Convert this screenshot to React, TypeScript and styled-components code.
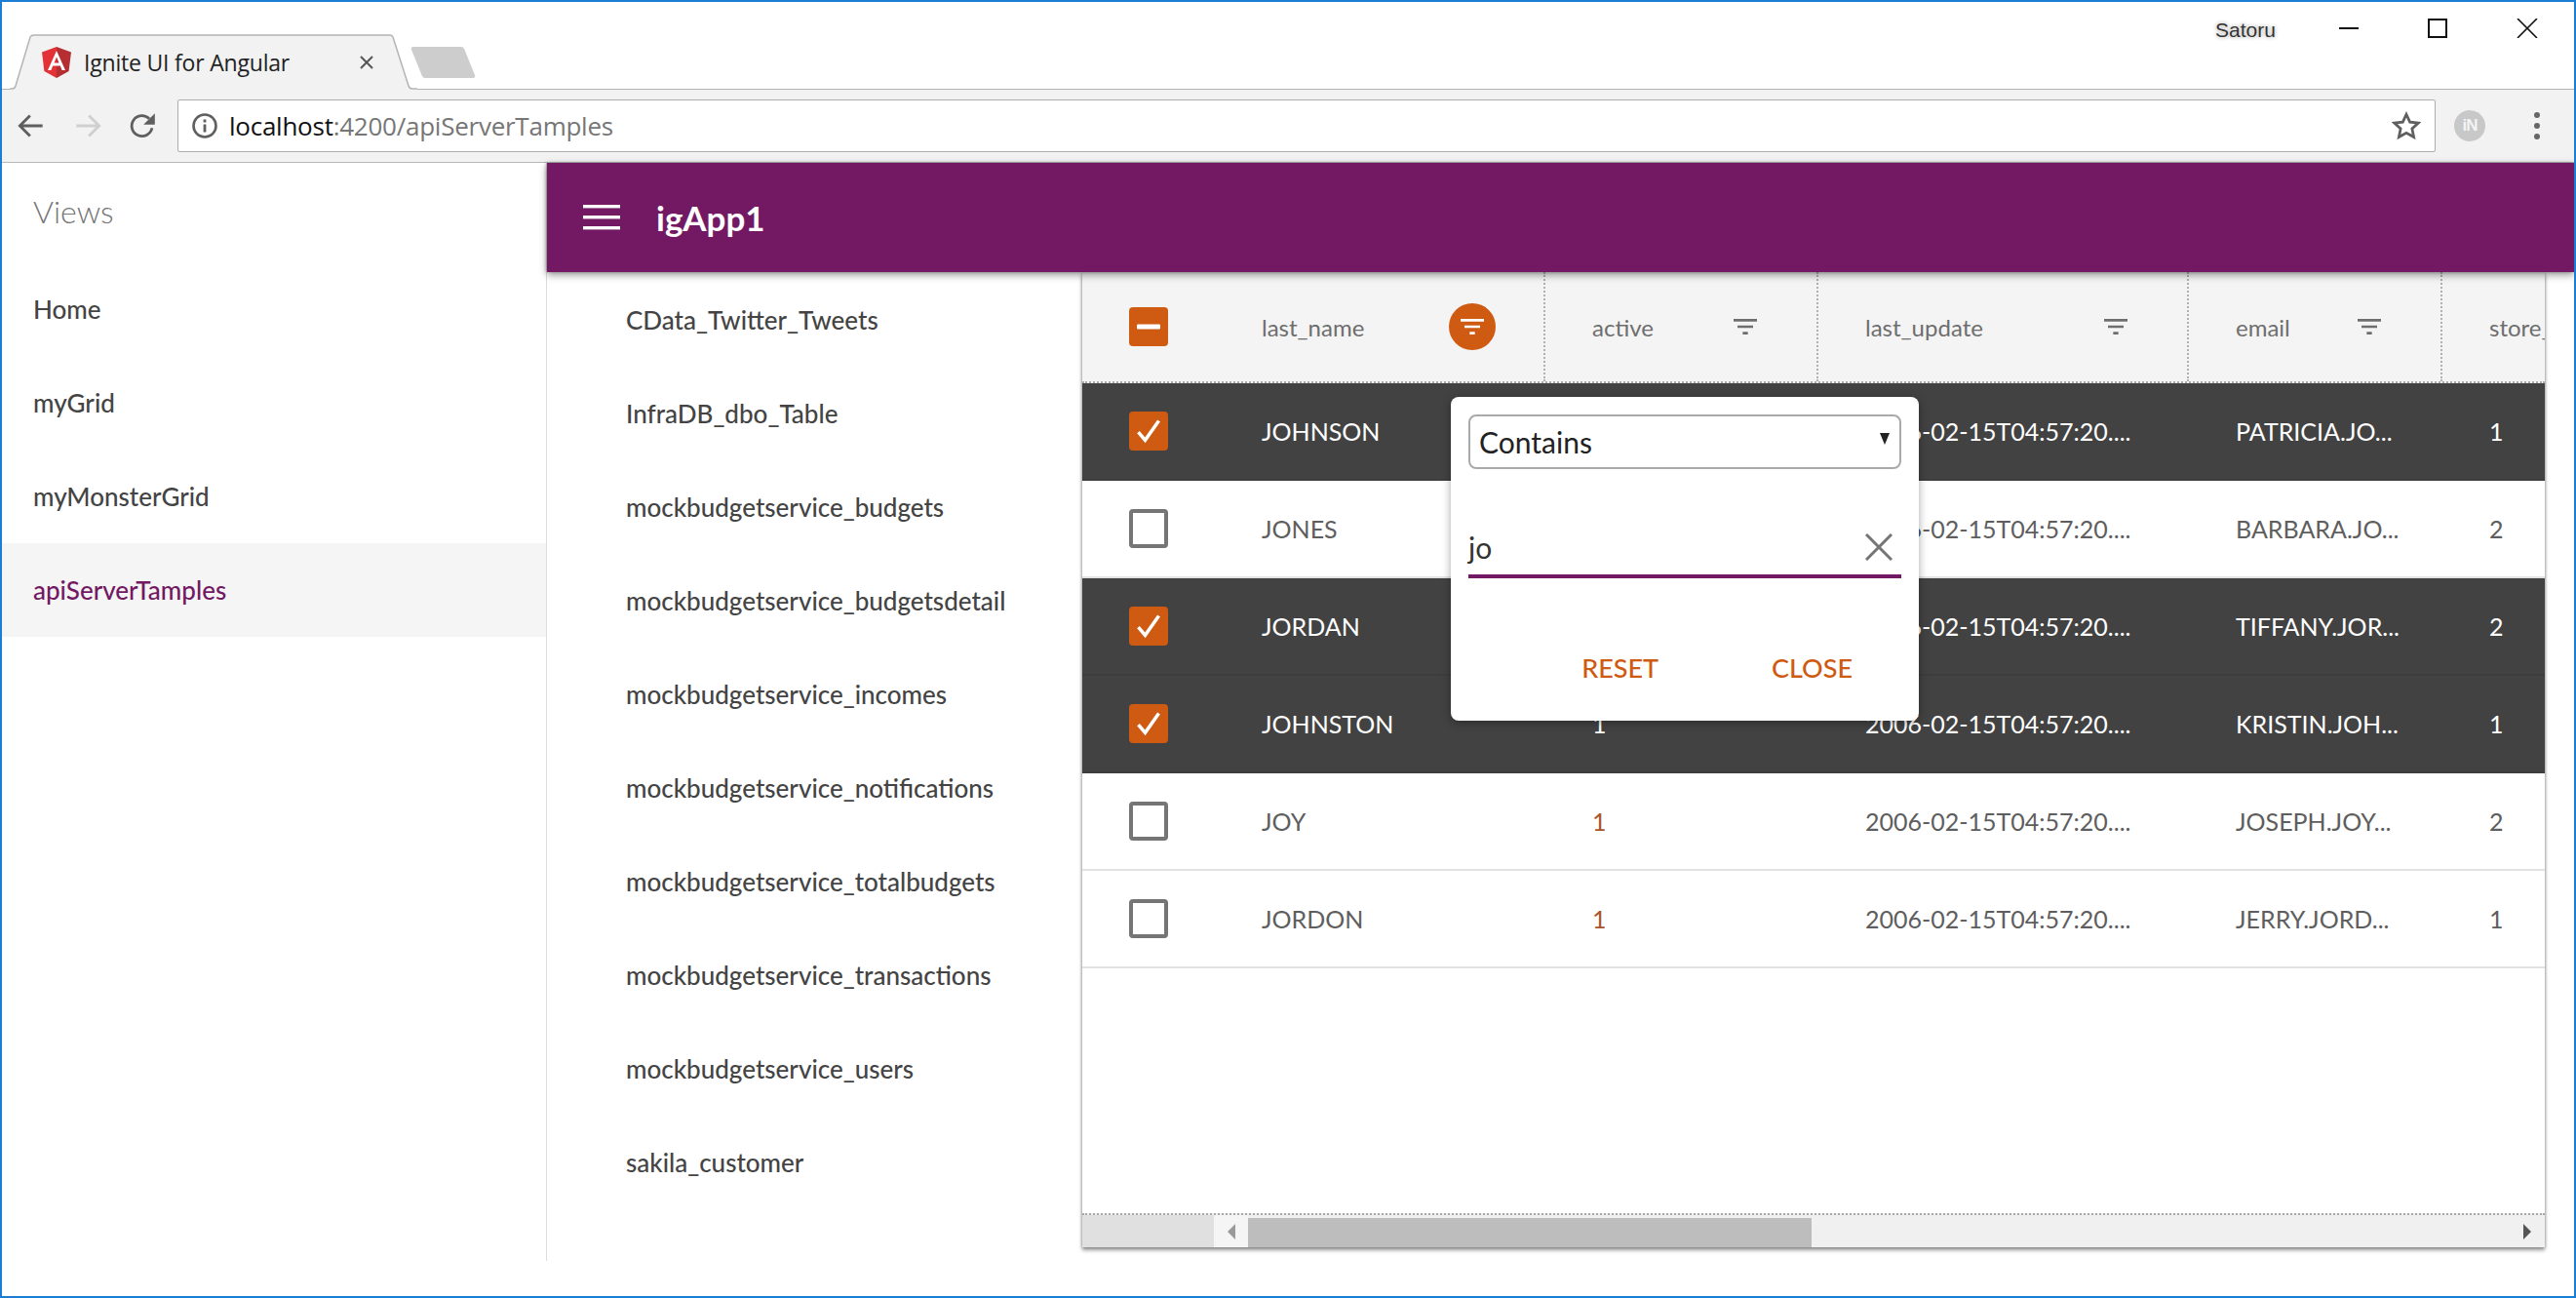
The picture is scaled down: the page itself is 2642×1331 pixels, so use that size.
import React from 'react';
import styled, { createGlobalStyle } from 'styled-components';

const ORANGE = '#cf5a11';
const PURPLE = '#731963';
const UI_FONT = '"Lato", "Noto Sans", sans-serif';

const GlobalStyle = createGlobalStyle`
  html, body { margin: 0; padding: 0; background: #fff; }
  * { box-sizing: border-box; }
`;

// Browser frame
const Frame = styled.div`
  width: 2642px;
  height: 1331px;
  border: 2px solid #1a7fd4;
  background: #fff;
  display: flex;
  flex-direction: column;
  overflow: hidden;
  font-family: ${UI_FONT};
`;

const TabStrip = styled.div`
  height: 90px;
  flex: none;
  display: flex;
  align-items: flex-end;
  padding-left: 8px;
  border-bottom: 1px solid #b4b4b4;
  position: relative;
`;

const Tab = styled.div`
  position: relative;
  width: 418px;
  height: 57px;
  margin-bottom: -1px;
  display: flex;
  align-items: center;
  padding-left: 33px;
  flex: none;
`;

const TabShape = styled.svg`
  position: absolute;
  left: 0;
  top: 0;
`;

const TabTitle = styled.span`
  position: relative;
  margin-left: 13px;
  width: 282px;
  font-family: "Open Sans", sans-serif;
  font-size: 23px;
  color: #222;
  letter-spacing: -0.2px;
  white-space: nowrap;
`;

const TabClose = styled.svg`
  position: relative;
`;

const Logo = styled.svg`
  position: relative;
  flex: none;
`;

const NewTab = styled.svg`
  margin: 0 0 9px -7px;
  flex: none;
`;

const Account = styled.div`
  position: absolute;
  left: 2270px;
  top: 15px;
  font-family: "Liberation Sans", sans-serif;
  font-size: 21px;
  line-height: 28px;
  color: #333;
  text-shadow: 0 0 3px #fff, 0 0 4px #888;
`;

const WindowIcons = styled.div`
  position: absolute;
  left: 2397px;
  top: 17px;
  display: flex;
  gap: 71px;
`;

const Toolbar = styled.div`
  height: 75px;
  flex: none;
  background: #f2f2f2;
  border-bottom: 1px solid #b8b8b8;
  display: flex;
  align-items: center;
  padding-left: 16px;
`;

const NavIcon = styled.svg<{ $gap?: number }>`
  flex: none;
  margin-right: ${(p) => p.$gap ?? 0}px;
`;

const Omnibox = styled.div`
  width: 2316px;
  height: 54px;
  background: #fff;
  border: 1px solid #adadad;
  border-radius: 2px;
  display: flex;
  align-items: center;
  padding: 0 14px 0 14px;
  margin-right: 19px;
  flex: none;
`;

const UrlText = styled.span`
  margin-left: 12px;
  font-family: "Open Sans", sans-serif;
  font-size: 26px;
  letter-spacing: -0.25px;
  color: #767676;
  flex: 1;
`;

const UrlHost = styled.span`
  color: #111;
`;

const ExtBadge = styled.div`
  width: 32px;
  height: 32px;
  border-radius: 50%;
  background: #c8c8c8;
  color: #f4f4f4;
  font-family: "Liberation Sans", sans-serif;
  font-weight: 700;
  font-size: 17px;
  letter-spacing: -1px;
  display: flex;
  align-items: center;
  justify-content: center;
  margin-right: 50px;
  flex: none;
`;

const Dots = styled.div`
  display: flex;
  flex-direction: column;
  gap: 5px;
`;

const Dot = styled.span`
  width: 6px;
  height: 6px;
  border-radius: 50%;
  background: #666;
`;

// App body
const Body = styled.div`
  flex: 1;
  min-height: 0;
  display: flex;
  align-items: flex-start;
`;

const Sidebar = styled.nav`
  width: 559px;
  height: 1126px;
  flex: none;
  border-right: 1px solid #dcdcdc;
`;

const SidebarTitle = styled.div`
  height: 102px;
  padding: 0 0 4px 32px;
  display: flex;
  align-items: center;
  font-size: 32px;
  font-weight: 300;
  color: #757575;
`;

const SidebarItem = styled.div<{ $active?: boolean }>`
  height: 96px;
  padding-left: 32px;
  display: flex;
  align-items: center;
  font-size: 26px;
  font-weight: 500;
  color: ${(p) => (p.$active ? PURPLE : '#444')};
  background: ${(p) => (p.$active ? '#f5f5f5' : 'transparent')};
`;

const Main = styled.div`
  flex: 1;
  min-width: 0;
  height: 100%;
  display: flex;
  flex-direction: column;
`;

const AppBar = styled.header`
  height: 112px;
  flex: none;
  background: ${PURPLE};
  display: flex;
  align-items: center;
  padding-left: 37px;
  gap: 37px;
  position: relative;
  z-index: 3;
  box-shadow: 0 3px 8px rgba(0, 0, 0, 0.4), -1px 0 3px rgba(0, 0, 0, 0.25);
`;

const Hamburger = styled.svg`
  flex: none;
`;

const AppTitle = styled.h1`
  margin: 0;
  font-size: 35px;
  font-weight: 700;
  color: #fff;
`;

const Content = styled.div`
  flex: 1;
  min-height: 0;
  display: flex;
  align-items: flex-start;
`;

const TableList = styled.ul`
  width: 549px;
  flex: none;
  list-style: none;
  margin: 0;
  padding: 1px 0 0 81px;
`;

const TableItem = styled.li`
  height: 96px;
  display: flex;
  align-items: center;
  font-size: 26px;
  font-weight: 500;
  color: #444;
`;

// Grid
const Grid = styled.div`
  position: relative;
  width: 1500px;
  height: 1000px;
  flex: none;
  display: flex;
  flex-direction: column;
  background: #fff;
  box-shadow: 0 3px 4px rgba(0, 0, 0, 0.4), 0 0 3px rgba(0, 0, 0, 0.3);
`;

const HeaderRow = styled.div`
  height: 114px;
  flex: none;
  display: grid;
  grid-template-columns: 136px 339px 280px 380px 260px 105px;
  background: #f4f4f4;
  border-bottom: 2px dotted #a8a8a8;
  overflow: hidden;
`;

const HeaderCell = styled.div<{ $sep?: boolean }>`
  display: flex;
  align-items: center;
  justify-content: space-between;
  padding: 0 49px 0 48px;
  min-width: 0;
  border-right: ${(p) => (p.$sep ? '2px dotted #b0b0b0' : 'none')};
  font-size: 24px;
  color: #6e6e6e;
  overflow: hidden;
  white-space: nowrap;
`;

const FilterButton = styled.div<{ $on?: boolean }>`
  width: 48px;
  height: 48px;
  flex: none;
  border-radius: 50%;
  display: flex;
  align-items: center;
  justify-content: center;
  background: ${(p) => (p.$on ? ORANGE : 'transparent')};
  color: ${(p) => (p.$on ? '#fff' : '#6e6e6e')};
`;

const CheckCell = styled.div`
  display: flex;
  align-items: center;
  padding-left: 48px;
`;

const CheckBox = styled.div<{ $on?: boolean }>`
  width: 40px;
  height: 40px;
  border-radius: 4px;
  display: flex;
  align-items: center;
  justify-content: center;
  background: ${(p) => (p.$on ? ORANGE : '#fff')};
  border: ${(p) => (p.$on ? 'none' : '4px solid #757575')};
`;

const Rows = styled.div`
  flex: 1;
  min-height: 0;
`;

const Row = styled.div<{ $selected?: boolean }>`
  height: 100px;
  display: grid;
  grid-template-columns: 136px 339px 280px 380px 260px 105px;
  background: ${(p) => (p.$selected ? '#424242' : '#fff')};
  color: ${(p) => (p.$selected ? '#fff' : '#5e5e5e')};
  border-bottom: 2px solid ${(p) => (p.$selected ? '#3d3d3d' : '#e2e2e2')};
`;

const Cell = styled.div<{ $accent?: boolean; $selected?: boolean }>`
  display: flex;
  align-items: center;
  padding-left: 48px;
  font-size: 25px;
  white-space: nowrap;
  overflow: hidden;
  color: ${(p) => (p.$accent && !p.$selected ? '#a8552a' : 'inherit')};
`;

const ScrollBar = styled.div`
  height: 35px;
  flex: none;
  display: flex;
  border-top: 2px dotted #a8a8a8;
  background: #f0f0f0;
`;

const ScrollCorner = styled.div`
  width: 135px;
  flex: none;
  background: #e0e0e0;
`;

const ScrollLeft = styled.div`
  width: 35px;
  flex: none;
  background: #f5f5f5;
  display: flex;
  align-items: center;
  padding-left: 14px;
`;

const ScrollThumbSlot = styled.div`
  flex: 1;
  display: flex;
  align-items: flex-end;
  justify-content: space-between;
  padding-right: 13px;
`;

const ScrollThumb = styled.div`
  width: 578px;
  height: 30px;
  background: #bdbdbd;
`;

const ScrollRight = styled.svg`
  align-self: center;
`;

// Filter popup
const Popup = styled.div`
  position: absolute;
  left: 378px;
  top: 128px;
  width: 480px;
  height: 332px;
  z-index: 2;
  background: #fff;
  border-radius: 8px;
  box-shadow: 0 2px 10px rgba(0, 0, 0, 0.35);
  padding: 18px 18px 0 18px;
  display: flex;
  flex-direction: column;
`;

const SelectBox = styled.div`
  height: 56px;
  flex: none;
  border: 2px solid #a9a9a9;
  border-radius: 8px;
  display: flex;
  align-items: center;
  justify-content: space-between;
  padding: 0 9px;
  font-size: 30px;
  color: #222;
`;

const Caret = styled.svg`
  margin-bottom: 6px;
`;

const InputRow = styled.div`
  height: 60px;
  flex: none;
  margin-top: 52px;
  border-bottom: 4px solid ${PURPLE};
  display: flex;
  align-items: center;
  justify-content: space-between;
  padding-right: 9px;
  font-size: 30px;
  color: #333;
`;

const PopupActions = styled.div`
  flex: 1;
  display: flex;
  justify-content: flex-end;
  align-items: flex-start;
  gap: 116px;
  padding: 74px 50px 0 0;
`;

const TextButton = styled.span`
  font-size: 27px;
  font-weight: 500;
  line-height: 36px;
  color: ${ORANGE};
`;

// Icons
const FilterIcon = ({ size = 32 }: { size?: number }) => (
  <svg width={size} height={size} viewBox="0 0 24 24" fill="currentColor">
    <path d="M10 18h4v-2h-4v2zM3 6v2h18V6H3zm3 7h12v-2H6v2z" />
  </svg>
);

const Check = () => (
  <svg width="28" height="28" viewBox="0 0 24 24" fill="none" stroke="#fff" strokeWidth="3">
    <path d="M3 13l6 7L21 3" />
  </svg>
);

const columns = ['active', 'last_update', 'email'];

const sideLinks = ['Home', 'myGrid', 'myMonsterGrid', 'apiServerTamples'];

const tables = [
  'CData_Twitter_Tweets',
  'InfraDB_dbo_Table',
  'mockbudgetservice_budgets',
  'mockbudgetservice_budgetsdetail',
  'mockbudgetservice_incomes',
  'mockbudgetservice_notifications',
  'mockbudgetservice_totalbudgets',
  'mockbudgetservice_transactions',
  'mockbudgetservice_users',
  'sakila_customer',
];

const rows = [
  { name: 'JOHNSON', email: 'PATRICIA.JO...', store: '1', selected: true },
  { name: 'JONES', email: 'BARBARA.JO...', store: '2', selected: false },
  { name: 'JORDAN', email: 'TIFFANY.JOR...', store: '2', selected: true },
  { name: 'JOHNSTON', email: 'KRISTIN.JOH...', store: '1', selected: true },
  { name: 'JOY', email: 'JOSEPH.JOY...', store: '2', selected: false },
  { name: 'JORDON', email: 'JERRY.JORD...', store: '1', selected: false },
];

const App = () => (
  <Frame>
    <GlobalStyle />
    <TabStrip>
      <Tab>
        <TabShape width="418" height="57" viewBox="0 0 418 57">
          <path d="M0 56 L3 56 Q5 56 6 53 L21 3 Q22 1 25 1 L390 1 Q392 1 393 3 L409 53 Q410 56 413 56 L418 56 L418 58 L0 58 Z" fill="#f2f2f2" />
          <path d="M0 56 L3 56 Q5 56 6 53 L21 3 Q22 1 25 1 L390 1 Q392 1 393 3 L409 53 Q410 56 413 56 L418 56" fill="none" stroke="#b4b4b4" strokeWidth="1.5" />
        </TabShape>
        <Logo width="30" height="32" viewBox="0 0 30 32">
          <path d="M15 0 L30 5.5 L27.6 25 L15 32 Z" fill="#b52e31" />
          <path d="M15 0 L0 5.5 L2.4 25 L15 32 Z" fill="#e23237" />
          <path d="M15 4 L6 24 H9.4 L11.2 19.5 H18.8 L20.6 24 H24 Z M12.5 16.6 L15 10.6 L17.5 16.6 Z" fill="#fff" />
        </Logo>
        <TabTitle>Ignite UI for Angular</TabTitle>
        <TabClose width="16" height="16" viewBox="0 0 16 16" stroke="#555" strokeWidth="2">
          <path d="M2 2l12 12M14 2L2 14" />
        </TabClose>
      </Tab>
      <NewTab width="68" height="34" viewBox="0 0 68 34">
        <path d="M3 0 H52 Q54 0 55 2 L66 29 Q67 32 64 32 H15 Q13 32 12 30 L1 3 Q0 0 3 0 Z" fill="#cdcdcd" />
      </NewTab>
      <Account>Satoru</Account>
      <WindowIcons>
        <svg width="20" height="20" viewBox="0 0 20 20" stroke="#111" strokeWidth="2">
          <path d="M0 10h20" />
        </svg>
        <svg width="20" height="20" viewBox="0 0 20 20" fill="none" stroke="#111" strokeWidth="2">
          <rect x="1" y="1" width="18" height="18" />
        </svg>
        <svg width="22" height="20" viewBox="0 0 20 20" stroke="#111" strokeWidth="1.6">
          <path d="M0 0l20 20M20 0L0 20" />
        </svg>
      </WindowIcons>
    </TabStrip>
    <Toolbar>
      <NavIcon $gap={30} width="28" height="28" viewBox="0 0 24 24" fill="none" stroke="#5f5f5f" strokeWidth="2.4">
        <path d="M22 12H3M11 3l-9 9 9 9" />
      </NavIcon>
      <NavIcon $gap={28} width="28" height="28" viewBox="0 0 24 24" fill="none" stroke="#cfcfcf" strokeWidth="2.4">
        <path d="M2 12h19M13 3l9 9-9 9" />
      </NavIcon>
      <NavIcon $gap={22} width="28" height="28" viewBox="0 0 24 24" fill="none">
        <path d="M20.5 14a9 9 0 1 1-2.4-8.2" stroke="#5f5f5f" strokeWidth="2.4" />
        <path d="M23 1v10H13z" fill="#5f5f5f" />
      </NavIcon>
      <Omnibox>
        <svg width="26" height="26" viewBox="0 0 26 26" fill="none" stroke="#5f5f5f">
          <circle cx="13" cy="13" r="11.5" strokeWidth="2.6" />
          <path d="M13 11.5v8M13 6.5v3" strokeWidth="2.8" />
        </svg>
        <UrlText>
          <UrlHost>localhost</UrlHost>:4200/apiServerTamples
        </UrlText>
        <svg width="30" height="30" viewBox="0 0 24 24" fill="none" stroke="#5f5f5f" strokeWidth="2.2">
          <path d="M12 2.6l2.9 6.3 6.9.8-5.1 4.7 1.4 6.8-6.1-3.4-6.1 3.4 1.4-6.8-5.1-4.7 6.9-.8z" />
        </svg>
      </Omnibox>
      <ExtBadge>iN</ExtBadge>
      <Dots>
        <Dot />
        <Dot />
        <Dot />
      </Dots>
    </Toolbar>
    <Body>
      <Sidebar>
        <SidebarTitle>Views</SidebarTitle>
        {sideLinks.map((link) => (
          <SidebarItem key={link} $active={link === 'apiServerTamples'}>
            {link}
          </SidebarItem>
        ))}
      </Sidebar>
      <Main>
        <AppBar>
          <Hamburger width="38" height="26" viewBox="0 0 38 26" fill="#fff">
            <rect y="0" width="38" height="3.4" />
            <rect y="11" width="38" height="3.4" />
            <rect y="22" width="38" height="3.4" />
          </Hamburger>
          <AppTitle>igApp1</AppTitle>
        </AppBar>
        <Content>
          <TableList>
            {tables.map((t) => (
              <TableItem key={t}>{t}</TableItem>
            ))}
          </TableList>
          <Grid>
            <HeaderRow>
              <CheckCell>
                <CheckBox $on>
                  <svg width="24" height="6" viewBox="0 0 24 6" fill="#fff">
                    <rect width="24" height="5" y="0.5" rx="1" />
                  </svg>
                </CheckBox>
              </CheckCell>
              <HeaderCell $sep>
                last_name
                <FilterButton $on>
                  <FilterIcon />
                </FilterButton>
              </HeaderCell>
              {columns.map((c) => (
                <HeaderCell key={c} $sep>
                  {c}
                  <FilterButton>
                    <FilterIcon />
                  </FilterButton>
                </HeaderCell>
              ))}
              <HeaderCell>store_id</HeaderCell>
            </HeaderRow>
            <Rows>
              {rows.map((r) => (
                <Row key={r.name} $selected={r.selected}>
                  <CheckCell>
                    <CheckBox $on={r.selected}>{r.selected && <Check />}</CheckBox>
                  </CheckCell>
                  <Cell>{r.name}</Cell>
                  <Cell $accent $selected={r.selected}>1</Cell>
                  <Cell>2006-02-15T04:57:20....</Cell>
                  <Cell>{r.email}</Cell>
                  <Cell>{r.store}</Cell>
                </Row>
              ))}
            </Rows>
            <ScrollBar>
              <ScrollCorner />
              <ScrollLeft>
                <svg width="9" height="16" viewBox="0 0 9 16" fill="#9a9a9a">
                  <path d="M8 0v16L0 8z" />
                </svg>
              </ScrollLeft>
              <ScrollThumbSlot>
                <ScrollThumb />
                <ScrollRight width="9" height="16" viewBox="0 0 9 16" fill="#555">
                  <path d="M0 0v16l8-8z" />
                </ScrollRight>
              </ScrollThumbSlot>
            </ScrollBar>
            <Popup>
              <SelectBox>
                Contains
                <Caret width="12" height="12" viewBox="0 0 12 12" fill="#222">
                  <path d="M1 0h10L6 12z" />
                </Caret>
              </SelectBox>
              <InputRow>
                jo
                <svg width="28" height="28" viewBox="0 0 28 28" stroke="#757575" strokeWidth="3">
                  <path d="M1 1l26 26M27 1L1 27" />
                </svg>
              </InputRow>
              <PopupActions>
                <TextButton>RESET</TextButton>
                <TextButton>CLOSE</TextButton>
              </PopupActions>
            </Popup>
          </Grid>
        </Content>
      </Main>
    </Body>
  </Frame>
);

export default App;
